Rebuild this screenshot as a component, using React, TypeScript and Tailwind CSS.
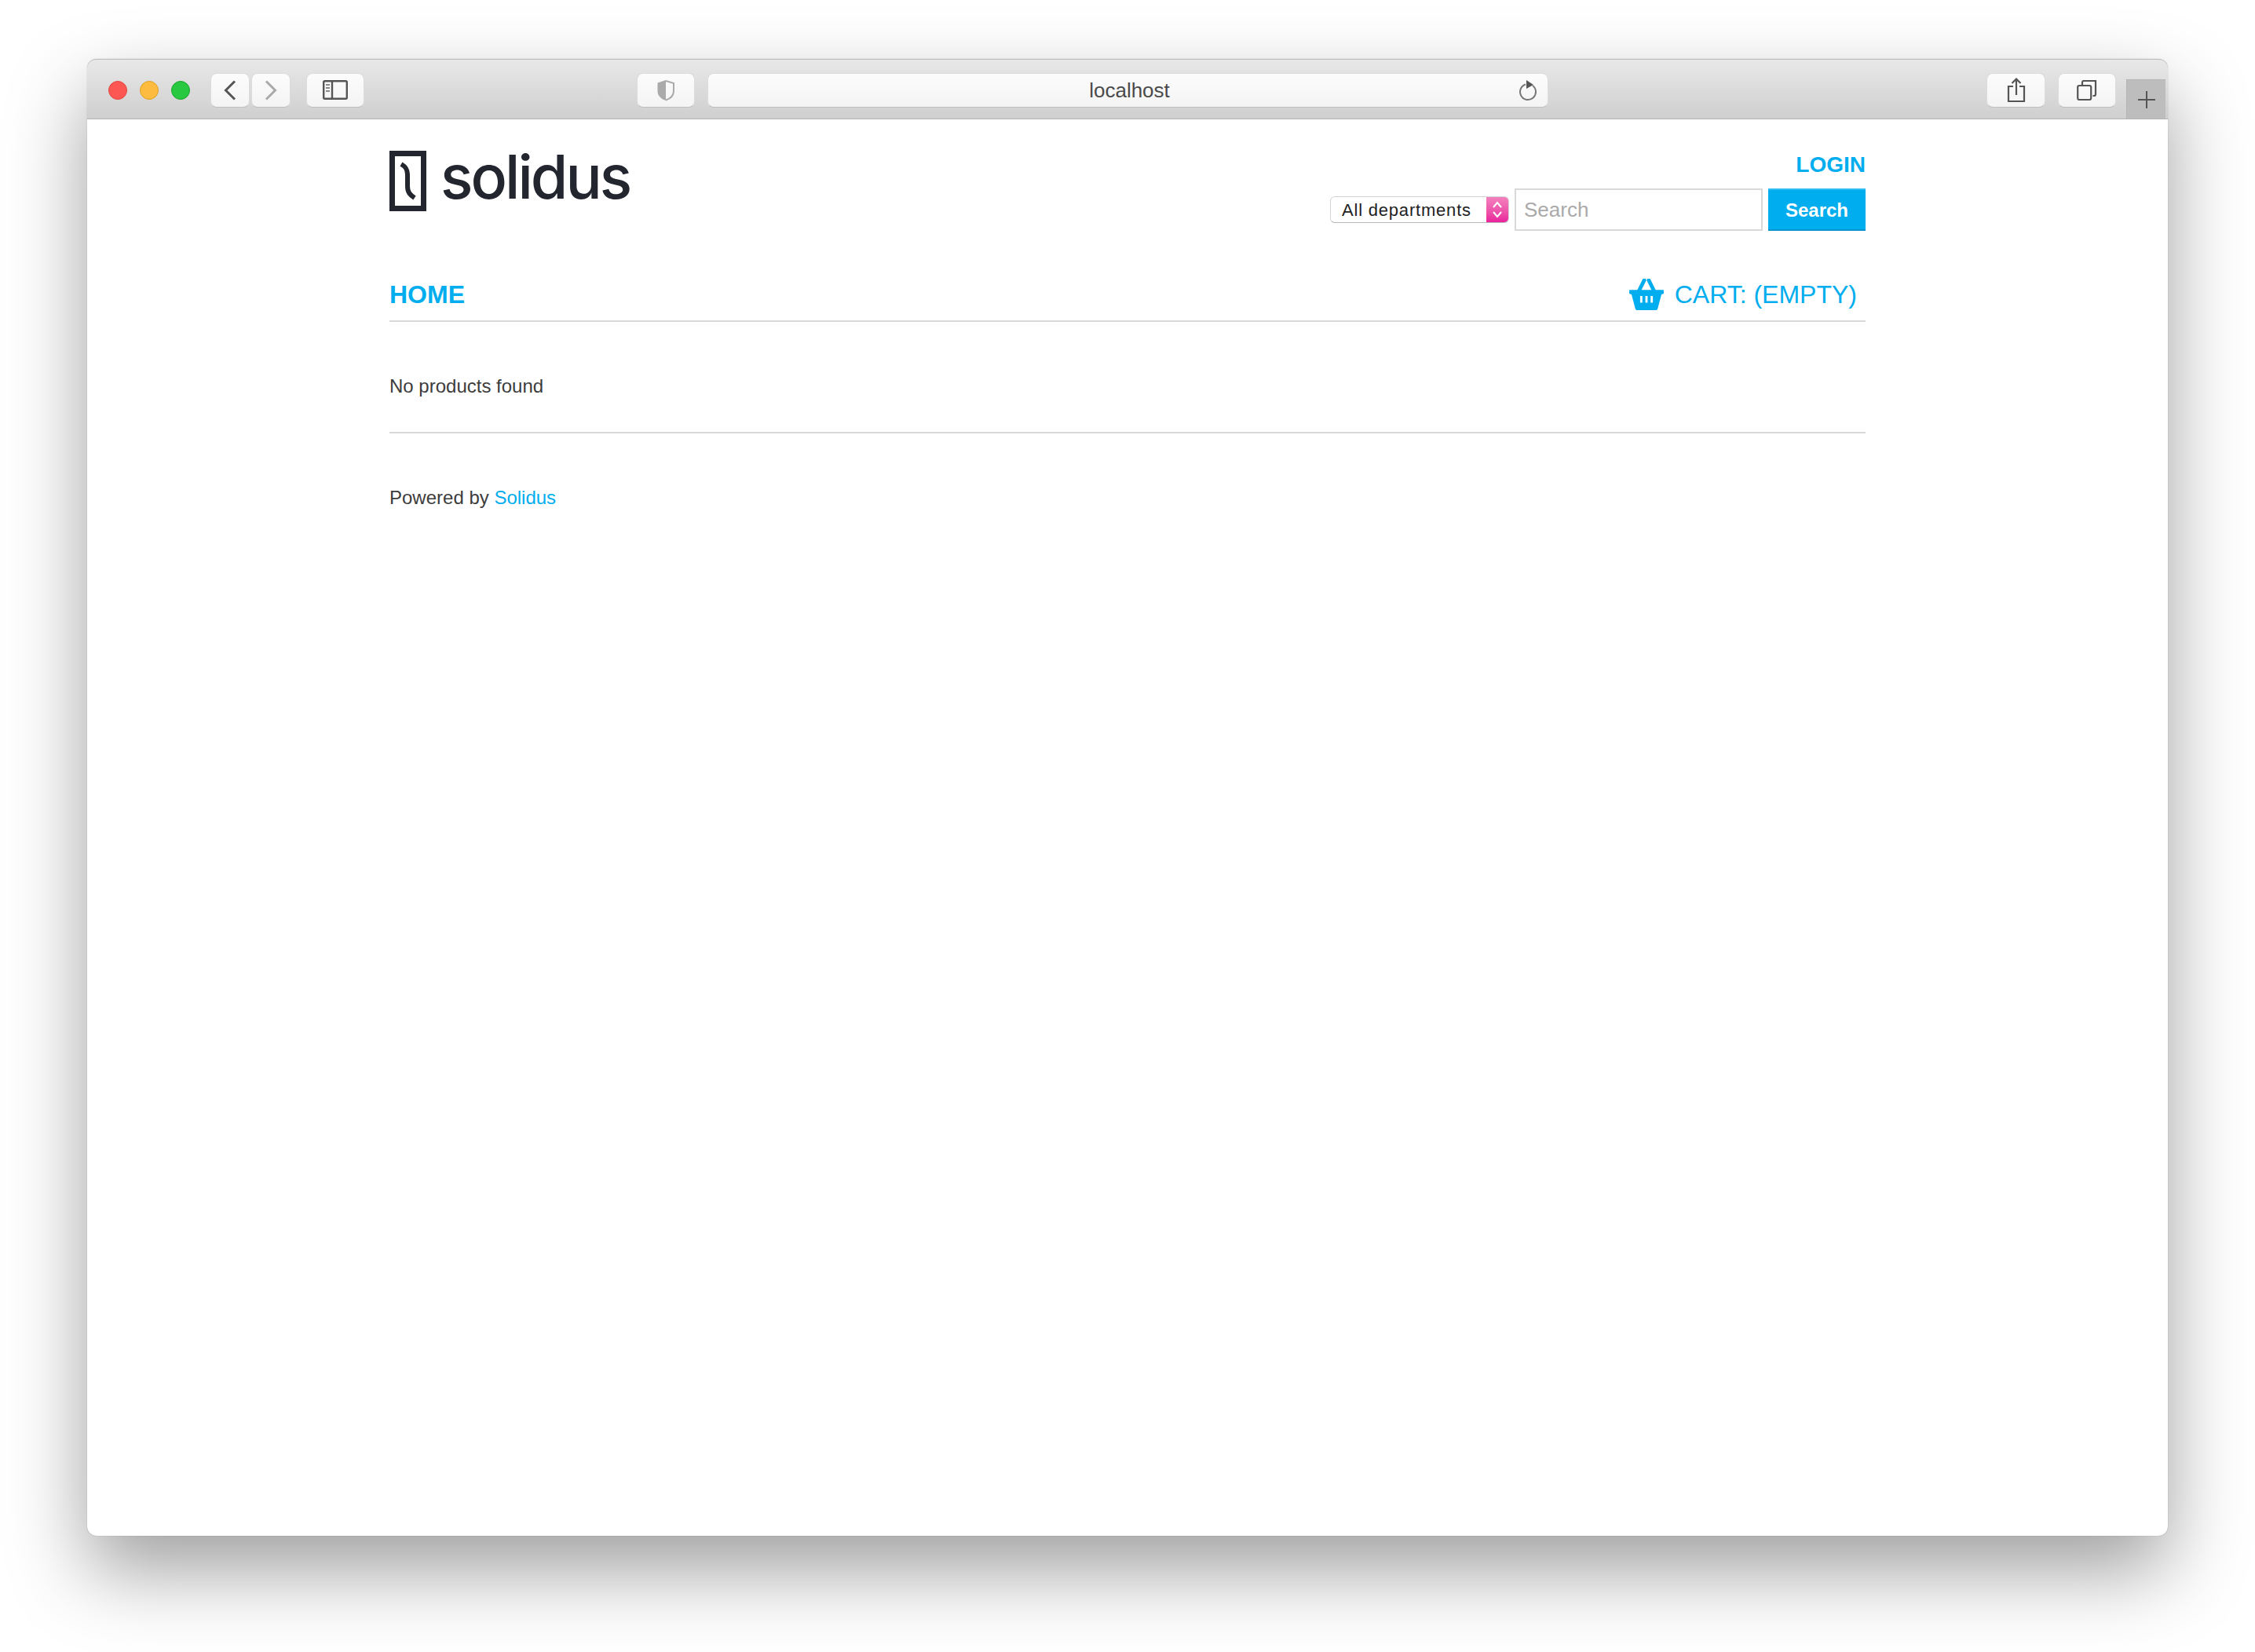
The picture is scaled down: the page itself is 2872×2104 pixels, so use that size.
import React from "react";

const sans = "font-['Liberation_Sans',Arial,sans-serif]";

function ToolButton({ className, children }: { className: string; children?: React.ReactNode }) {
  return (
    <div
      className={`flex h-[44px] shrink-0 items-center justify-center rounded-[8px] border border-[#dcdcdc] border-b-[#bfbfbf] bg-gradient-to-b from-[#fcfcfc] to-[#f4f4f4] ${className}`}
    >
      {children}
    </div>
  );
}

function Toolbar() {
  return (
    <div className="flex h-[77px] items-center rounded-t-[12px] border-y border-t-[#bcbcbc] border-b-[#b4b4b4] bg-gradient-to-b from-[#e8e8e8] to-[#cfcfcf] pt-[2px] pl-[27px]">
      <div className="flex gap-[16px]">
        <div className="h-[24px] w-[24px] rounded-full border border-[#e2463f] bg-[#fc5753]" />
        <div className="h-[24px] w-[24px] rounded-full border border-[#dfa023] bg-[#fdbc40]" />
        <div className="h-[24px] w-[24px] rounded-full border border-[#1ba52c] bg-[#28c840]" />
      </div>

      <ToolButton className="ml-[26px] w-[50px]">
        <svg width="16" height="26" viewBox="0 0 16 26" fill="none" stroke="#555" strokeWidth="3">
          <path d="M14 1.5 2.5 13 14 24.5" />
        </svg>
      </ToolButton>
      <ToolButton className="ml-[2px] w-[50px]">
        <svg width="16" height="26" viewBox="0 0 16 26" fill="none" stroke="#aaa" strokeWidth="3">
          <path d="M2 1.5 13.5 13 2 24.5" />
        </svg>
      </ToolButton>
      <ToolButton className="ml-[20px] w-[74px]">
        <svg width="32" height="25" viewBox="0 0 32 25" fill="none" stroke="#555" strokeWidth="2.4">
          <rect x="1.2" y="1.2" width="29.6" height="22.6" rx="1.5" />
          <path d="M12 1v23" />
          <path d="M4 6h5M4 10h5M4 14h5" strokeWidth="1.8" stroke="#888" />
        </svg>
      </ToolButton>

      <ToolButton className="ml-[347px] w-[74px]">
        <svg width="24" height="28" viewBox="0 0 24 28" fill="none">
          <path d="M12 1 1.5 4.5V15c0 6 4.500 10 10.500 12z" fill="#aaa" />
          <path d="M12 2 22 5v10c0 5.500-4 9.500-10 11.500" stroke="#aaa" strokeWidth="2" />
        </svg>
      </ToolButton>
      <div className={`relative ml-[16px] flex h-[44px] w-[1071px] shrink-0 items-center justify-center rounded-[8px] border border-[#dcdcdc] border-b-[#bfbfbf] bg-gradient-to-b from-[#fcfcfc] to-[#f4f4f4] pt-[2px] pl-[4px] text-[26px] text-[#4a4a4a] ${sans}`}>
        localhost
        <svg className="absolute right-[12px] top-[8px]" width="24" height="27" viewBox="0 0 24 27" fill="none">
          <path d="M8 5.500A10 10 0 1 0 17 7" stroke="#777" strokeWidth="2" />
          <path d="M9 0l9 6-9 5z" fill="#555" />
        </svg>
      </div>

      <ToolButton className="ml-[558px] w-[75px]">
        <svg width="24" height="32" viewBox="0 0 24 32" fill="none" stroke="#555" strokeWidth="2.200">
          <path d="M8 11H2v19h20V11h-6" />
          <path d="M12 22V2M6.500 7 12 1.500 17.500 7" />
        </svg>
      </ToolButton>
      <ToolButton className="ml-[16px] w-[74px]">
        <svg width="26" height="26" viewBox="0 0 26 26" fill="none" stroke="#555" strokeWidth="2.200">
          <rect x="1.200" y="7" width="17" height="18" rx="2" />
          <path d="M7 6.500V3a2 2 0 0 1 2-2h15v17a2 2 0 0 1-2 2h-1.500" />
        </svg>
      </ToolButton>
      <div className="ml-[13px] flex h-[50px] w-[50px] items-center justify-center self-end border-t border-l border-[#b4b4b4] bg-[#bdbdbd]">
        <svg width="24" height="24" viewBox="0 0 24 24" stroke="#555" strokeWidth="2">
          <path d="M12 1v22M1 12h22" />
        </svg>
      </div>
    </div>
  );
}

function SolidusLogo() {
  return (
    <div className="flex items-start">
      <svg width="47" height="77" viewBox="0 0 47 77" fill="none" className="shrink-0">
        <rect x="3.500" y="3.500" width="40" height="70" stroke="#23262f" strokeWidth="7" />
        <path d="M15 17c5 3 8 6 8 13v15c0 8 3 11 9 15" stroke="#23262f" strokeWidth="6" />
      </svg>
      <span className="-mt-[13px] ml-[18px] font-['Inter',sans-serif] text-[77px] font-medium leading-[92px] tracking-[-3px] text-[#23262f]">
        solidus
      </span>
    </div>
  );
}

function BasketIcon() {
  return (
    <svg width="46" height="40" viewBox="-1 -1 46 42" className="shrink-0">
      <path d="M12 15 19 1M32 15 25 1" stroke="#00adee" strokeWidth="5" strokeLinecap="round" />
      <path d="M-1 14h46v5l-3 1-5 19c-.300 1-1 2-2 2H9c-1 0-1.700-1-2-2L2 20l-3-1z" fill="#00adee" />
      <path d="M15 22v9M22 22v9M29 22v9" stroke="#fff" strokeWidth="3" />
    </svg>
  );
}

function SearchBar() {
  return (
    <div className="mt-[14px] flex items-center">
      <div className="flex h-[34px] w-[228px] items-stretch overflow-hidden rounded-[6px] border border-[#d4d4d4] border-b-[#b8b8b8] bg-white">
        <span className="flex-1 pt-[1px] pl-[14px] text-[22px] leading-[32px] tracking-[0.800px] text-[#222]">All departments</span>
        <div className="flex w-[28px] items-center justify-center bg-gradient-to-b from-[#f27fbd] to-[#e91e9c]">
          <svg width="14" height="24" viewBox="0 0 14 24" fill="none" stroke="#fff" strokeWidth="2">
            <path d="M2 9l5-6 5 6M2 15l5 6 5-6" />
          </svg>
        </div>
      </div>
      <div className="ml-[7px] flex h-[54px] w-[316px] items-center border-2 border-[#d9d9d9] bg-white pl-[10px] text-[26px] text-[#aaaaaa]">
        Search
      </div>
      <button className="ml-[7px] h-[54px] w-[124px] border-y-2 border-t-[#33bdf1] border-b-[#0a94cc] bg-[#00adee] pt-[2px] text-[24px] font-bold text-white">
        Search
      </button>
    </div>
  );
}

export default function App() {
  return (
    <div className={`h-[2104px] w-[2872px] overflow-hidden bg-white pt-[75px] pl-[111px] ${sans}`}>
      <div className="h-[1881px] w-[2650px] rounded-[12px] bg-white shadow-[0_0_1px_rgba(0,0,0,0.45),0_44px_100px_rgba(0,0,0,0.38)]">
        <Toolbar />
        <div className="w-[1880px] ml-[385px]">
          <header className="flex items-start justify-between pt-[40px]">
            <SolidusLogo />
            <div className="flex flex-col items-end">
              <a className="mt-[2px] text-[28px] font-bold leading-[32px] text-[#00adee]">LOGIN</a>
              <SearchBar />
            </div>
          </header>

          <nav className="mt-[61px] flex items-center justify-between border-b-2 border-[#d9d9d9] pb-[13px]">
            <a className="text-[32px] font-bold leading-[40px] text-[#00adee]">HOME</a>
            <div className="mr-[11px] flex items-center gap-[13px]">
              <BasketIcon />
              <span className="text-[32px] leading-[40px] text-[#00adee]">CART: (EMPTY)</span>
            </div>
          </nav>

          <main className="mt-[66px] border-b-2 border-[#d9d9d9] pb-[42px]">
            <p className="text-[24px] leading-[32px] text-[#3c3c3c]">No products found</p>
          </main>

          <footer className="mt-[66px] text-[24px] leading-[32px] text-[#3c3c3c]">
            Powered by <a className="text-[#00adee]">Solidus</a>
          </footer>
        </div>
      </div>
    </div>
  );
}
